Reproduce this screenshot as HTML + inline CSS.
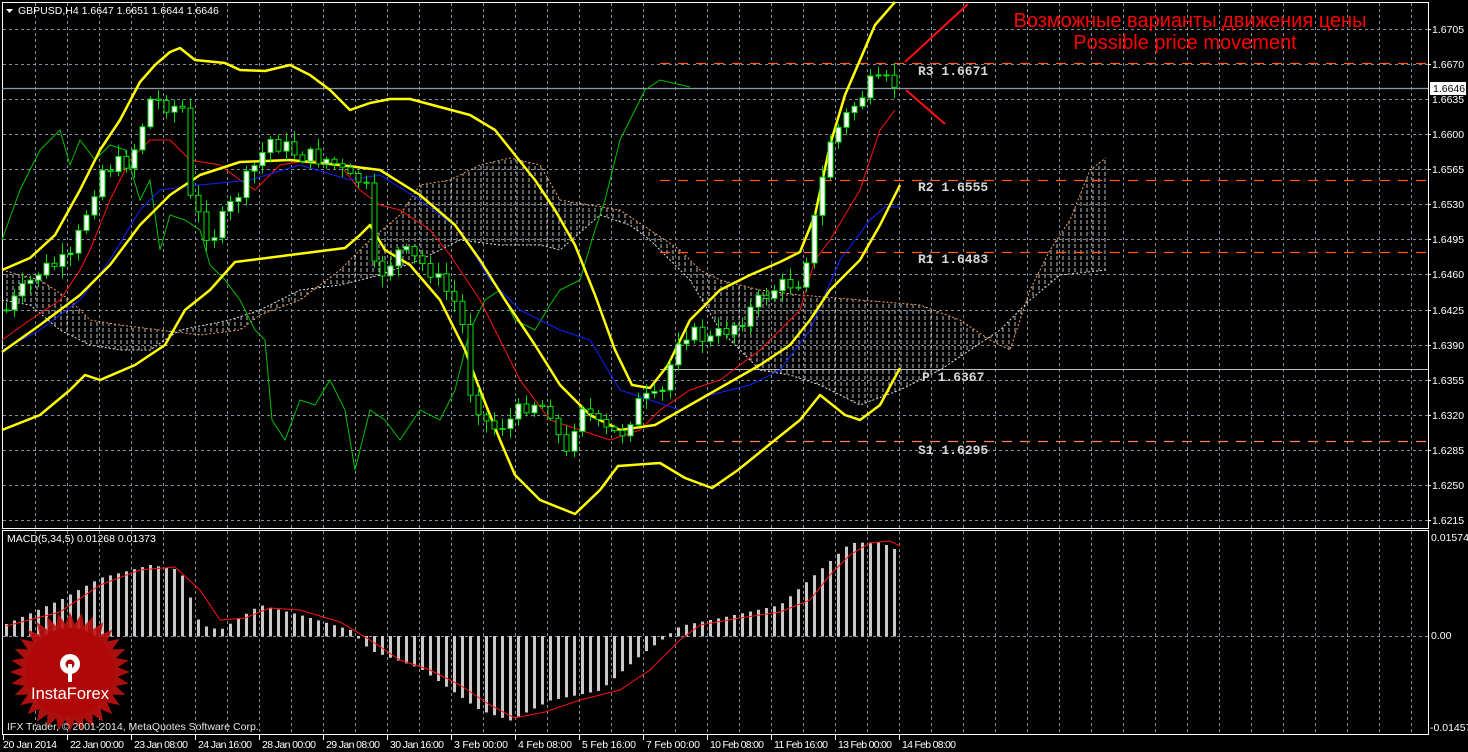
<!DOCTYPE html><html><head><meta charset="utf-8"><style>
body{margin:0;background:#000;width:1468px;height:752px;overflow:hidden;font-family:"Liberation Sans",sans-serif}
svg{display:block}
.ax{fill:#fff;font-size:10.5px;font-family:"Liberation Sans",sans-serif}
.pv{fill:#d8d8d8;font:bold 13px "Liberation Mono",monospace}
</style></head><body>
<svg id="s" width="1468" height="752" viewBox="0 0 1468 752" xmlns="http://www.w3.org/2000/svg">
<defs>
<pattern id="hw" width="6" height="6" patternUnits="userSpaceOnUse"><line x1="1" y1="0" x2="1" y2="6" stroke="#e0e0e0" stroke-width="1" stroke-dasharray="2,2"/></pattern>
</defs>
<rect width="1468" height="752" fill="#000"/>
<g id="grid" stroke="#8090a0" stroke-width="1" stroke-dasharray="3,3"></g>
<rect x="2.5" y="2.5" width="1426" height="526" fill="none" stroke="#fff"/>
<rect x="2.5" y="530.5" width="1426" height="204" fill="none" stroke="#fff"/>
<polygon points="2,270 40,280 70,300 90,320 120,325 160,330 200,335 240,330 260,315 300,300 340,270 370,240 400,215 420,185 450,180 480,165 510,158 540,165 560,200 590,205 620,210 650,230 680,250 700,270 720,280 760,290 800,295 860,300 920,305 960,320 990,340 1010,350 1030,290 1050,250 1070,220 1090,170 1106,158 1106,270 1060,275 1030,300 1000,330 970,350 940,370 900,390 860,405 820,385 790,375 760,370 720,330 690,280 670,260 650,240 630,225 600,215 560,250 540,245 500,245 460,240 420,260 380,275 340,285 300,290 260,310 230,320 180,330 150,350 120,350 90,345 60,330 30,305 2,300" fill="url(#hw)" opacity="0.85"/>
<polyline points="2,270 40,280 70,300 90,320 120,325 160,330 200,335 240,330 260,315 300,300 340,270 370,240 400,215 420,185 450,180 480,165 510,158 540,165 560,200 590,205 620,210 650,230 680,250 700,270 720,280 760,290 800,295 860,300 920,305 960,320 990,340 1010,350 1030,290 1050,250 1070,220 1090,170 1106,158" fill="none" stroke="#f0a060" stroke-dasharray="2,2"/>
<polyline points="2,300 30,305 60,330 90,345 120,350 150,350 180,330 230,320 260,310 300,290 340,285 380,275 420,260 460,240 500,245 540,245 560,250 600,215 630,225 650,240 670,260 690,280 720,330 760,370 790,375 820,385 860,405 900,390 940,370 970,350 1000,330 1030,300 1060,275 1106,270" fill="none" stroke="#e0e0e0" stroke-dasharray="2,2"/>
<line x1="660" y1="63.5" x2="1428" y2="63.5" stroke="#ff5a10" stroke-width="1.3" stroke-dasharray="10,8"/>
<line x1="660" y1="180.5" x2="1428" y2="180.5" stroke="#ff5a10" stroke-width="1.3" stroke-dasharray="10,8"/>
<line x1="660" y1="252.5" x2="1428" y2="252.5" stroke="#ff5a10" stroke-width="1.3" stroke-dasharray="10,8"/>
<line x1="660" y1="369.5" x2="1428" y2="369.5" stroke="#c0c0c0" stroke-width="1"/>
<line x1="660" y1="441.5" x2="1428" y2="441.5" stroke="#ff8050" stroke-width="1.3" stroke-dasharray="10,8"/>
<line x1="2" y1="88.5" x2="1428" y2="88.5" stroke="#8a9aaa" stroke-width="1.3"/>
<polyline fill="none" stroke="#00c000" stroke-width="1" points="2,240 20,190 30,170 40,150 60,130 70,165 80,140 95,160 110,145 125,150 140,200 150,180 160,250 170,215 185,220 200,230 210,265 225,280 240,300 255,330 265,340 272,420 285,440 300,400 315,405 330,380 345,410 355,470 370,410 385,420 400,440 420,410 440,420 455,390 470,330 485,300 500,290 515,320 535,330 550,305 560,290 580,280 595,230 605,200 620,140 635,110 645,90 660,80 690,87"/>
<polyline fill="none" stroke="#ff1010" stroke-width="1" points="2,340 30,320 60,300 80,270 90,250 110,200 130,160 150,140 170,140 190,160 220,165 240,180 255,190 280,165 310,160 340,165 360,190 380,205 400,210 430,230 450,255 460,270 480,300 490,320 505,350 520,380 550,420 580,430 610,440 640,430 660,410 690,390 720,380 760,350 800,310 815,260 830,240 845,215 860,190 870,160 880,130 895,110"/>
<polyline fill="none" stroke="#1020ff" stroke-width="1" points="2,350 40,330 80,300 110,260 140,210 160,190 200,185 250,180 300,165 350,180 380,175 420,200 460,230 490,280 520,310 560,330 590,340 620,390 650,400 680,410 710,395 750,385 780,370 810,330 840,260 870,220 885,207 900,207"/>
<polyline fill="none" stroke="#ffff00" stroke-width="2.5" stroke-linejoin="round" points="2,270 30,258 55,235 80,190 100,150 120,120 140,82 155,65 170,52 180,48 195,60 225,63 240,70 265,71 290,65 310,75 330,90 350,110 370,103 390,99 410,99 440,107 470,115 495,130 515,155 535,180 555,210 575,245 595,295 615,350 632,385 650,388 668,365 690,320 720,290 750,275 780,262 800,252 815,215 830,145 845,95 860,60 875,25 895,2"/>
<polyline fill="none" stroke="#ffff00" stroke-width="2.5" stroke-linejoin="round" points="2,352 40,325 80,295 110,265 140,225 170,195 200,175 240,162 290,160 340,165 380,170 420,195 455,225 480,260 505,300 535,345 560,385 590,415 620,430 655,425 690,405 725,385 760,365 790,345 810,320 830,290 860,260 880,225 900,185"/>
<polyline fill="none" stroke="#ffff00" stroke-width="2.5" stroke-linejoin="round" points="2,430 40,415 70,390 85,375 100,380 135,365 165,345 185,310 210,290 235,262 290,255 345,248 360,235 370,225 385,250 410,265 440,300 465,350 480,390 500,440 515,475 540,500 575,514 600,490 618,466 660,463 685,478 712,488 738,470 775,440 800,420 820,395 845,415 860,420 880,405 900,368"/>
<g id="candles"></g>
<line x1="905" y1="62" x2="968" y2="4" stroke="#ff1010" stroke-width="2"/>
<line x1="906" y1="90" x2="945" y2="124" stroke="#ff1010" stroke-width="2"/>
<text x="1190" y="27" fill="#ff0000" font-size="20" text-anchor="middle" font-family="Liberation Sans,DejaVu Sans,sans-serif">Возможные варианты движения цены</text>
<text x="1185" y="49" fill="#ff0000" font-size="20" text-anchor="middle">Possible price movement</text>
<text x="918" y="75" class="pv">R3 1.6671</text>
<text x="918" y="191" class="pv">R2 1.6555</text>
<text x="918" y="263" class="pv">R1 1.6483</text>
<text x="922" y="381" class="pv">P 1.6367</text>
<text x="918" y="454" class="pv">S1 1.6295</text>
<polygon points="6,9 13,9 9.5,13" fill="#fff"/>
<text x="18" y="14" class="ax" font-size="11">GBPUSD,H4  1.6647 1.6651 1.6644 1.6646</text>
<g id="yax"></g>
<rect x="1430" y="82" width="36" height="13" fill="#fff"/>
<text x="1433" y="92" font-size="10.5" fill="#000">1.6646</text>
<g id="macd"></g>
<polyline fill="none" stroke="#ff1010" stroke-width="1" points="6,626 60,612 100,585 140,570 175,567 200,590 220,620 245,618 270,608 300,610 340,622 370,640 400,660 430,670 460,685 490,705 515,718 545,712 580,700 620,690 650,670 680,640 700,625 740,618 780,612 810,600 830,575 850,555 870,543 890,541 900,546"/>
<text x="7" y="542" class="ax" font-size="10">MACD(5,34,5) 0.01268 0.01373</text>
<text x="1431" y="541" class="ax" font-size="10">0.01574</text>
<text x="1431" y="639" class="ax" font-size="10">0.00</text>
<text x="1430" y="731" class="ax" font-size="10">-0.01457</text>
<g transform="translate(70,672)">
<polygon id="star" fill="#c01010" opacity="0.9"/>
<circle r="44" fill="#b00808"/>
<g fill="#fff"><circle cx="0" cy="-8" r="10"/><circle cx="0" cy="-8" r="4.5" fill="#b00808"/><rect x="-2" y="-8" width="4" height="18"/></g>
<text x="0" y="27" fill="#fff" font-size="16.5" text-anchor="middle">InstaForex</text>
</g>
<text x="7" y="730" class="ax" font-size="9.5" fill-opacity="0.9">IFX Trader, © 2001-2014, MetaQuotes Software Corp.</text>
<g id="xax"></g>
</svg>
<script>
var NS="http://www.w3.org/2000/svg";
function el(p,t,a,txt){var e=document.createElementNS(NS,t);for(var k in a)e.setAttribute(k,a[k]);if(txt)e.textContent=txt;p.appendChild(e);return e;}
(function(){
var g=document.getElementById('grid');
for(var x=35;x<1428;x+=32)el(g,'line',{x1:x+.5,y1:3,x2:x+.5,y2:528});
for(var x=35;x<1428;x+=32)el(g,'line',{x1:x+.5,y1:531,x2:x+.5,y2:734});
for(var i=0;i<15;i++){var y=Math.round(29+35.07*i)+.5;el(g,'line',{x1:3,y1:y,x2:1428,y2:y});}
el(g,'line',{x1:3,y1:636.5,x2:1428,y2:636.5});
var ya=document.getElementById('yax');
for(var i=0;i<15;i++){var y=Math.round(29+35.07*i);if(i==2)continue;el(ya,'text',{x:1432,y:y+4,'class':'ax'},(1.6705-0.0035*i).toFixed(4));el(ya,'line',{x1:1428,y1:y+.5,x2:1431,y2:y+.5,stroke:'#fff'});}
el(ya,'text',{x:1432,y:103,'class':'ax'},'1.6635');
var labs=["20 Jan 2014","22 Jan 00:00","23 Jan 08:00","24 Jan 16:00","28 Jan 00:00","29 Jan 08:00","30 Jan 16:00","3 Feb 00:00","4 Feb 08:00","5 Feb 16:00","7 Feb 00:00","10 Feb 08:00","11 Feb 16:00","13 Feb 00:00","14 Feb 08:00"];
var xa=document.getElementById('xax');
labs.forEach(function(l,i){var x=3+64*i;el(xa,'line',{x1:x+.5,y1:735,x2:x+.5,y2:740,stroke:'#fff'});var a={x:(i==0?3:x+3),y:748,'class':'ax',fill:'#fff','font-size':'10'};if(l.length>=11)a.textLength=54;el(xa,'text',a,l);});
function interp(P,x){for(var i=1;i<P.length;i++){if(x<=P[i][0]){var a=P[i-1],b=P[i];return a[1]+(b[1]-a[1])*(x-a[0])/(b[0]-a[0]);}}return P[P.length-1][1];}
var C=[[6,310],[40,270],[70,260],[100,170],[130,160],[150,100],[170,105],[185,110],[190,200],[210,240],[240,190],[270,140],[300,155],[330,160],[350,180],[365,180],[375,280],[400,250],[430,270],[460,310],[470,390],[490,430],[510,420],[530,400],[550,410],[565,460],[580,400],[600,430],[620,435],[640,400],[660,400],[680,330],[710,340],[740,320],[770,290],[800,280],[810,240],[830,140],[850,110],[870,85],[890,82],[900,88]];
var cg=document.getElementById('candles');var prev=310;var seed=7;function rnd(){seed=(seed*9301+49297)%233280;return seed/233280;}
for(var x=6;x<=900;x+=8){var c=interp(C,x)+(rnd()-0.5)*18;var o=prev;var t1=Math.min(o,c),b1=Math.max(o,c);var hi=t1-2-rnd()*10,lo=b1+2+rnd()*10;
el(cg,'line',{x1:x+.5,y1:hi,x2:x+.5,y2:lo,stroke:'#00e000'});
el(cg,'rect',{x:x-2,y:t1,width:5,height:Math.max(1,b1-t1),fill:(c<o?'#fff':'#000'),stroke:'#00e000','stroke-width':1});prev=c;}
var M=[[6,624],[60,600],[100,578],[150,565],[180,570],[200,625],[220,630],[260,605],[300,615],[350,630],[370,650],[420,668],[480,710],[510,720],[550,700],[600,690],[640,655],[680,626],[720,618],[780,605],[820,570],[850,543],[880,542],[900,552]];
var mg=document.getElementById('macd');
for(var x=6;x<=900;x+=8){var y=interp(M,x);el(mg,'rect',{x:x-1,y:Math.min(y,636),width:3,height:Math.abs(636-y)+0.5,fill:'#c8c8c8'});}
var pts=[];for(var i=0;i<64;i++){var r=i%2?48:60;var a=i*Math.PI/32;pts.push((r*Math.cos(a)).toFixed(1)+','+(r*Math.sin(a)).toFixed(1));}
document.getElementById('star').setAttribute('points',pts.join(' '));
})();
</script>
</body></html>
